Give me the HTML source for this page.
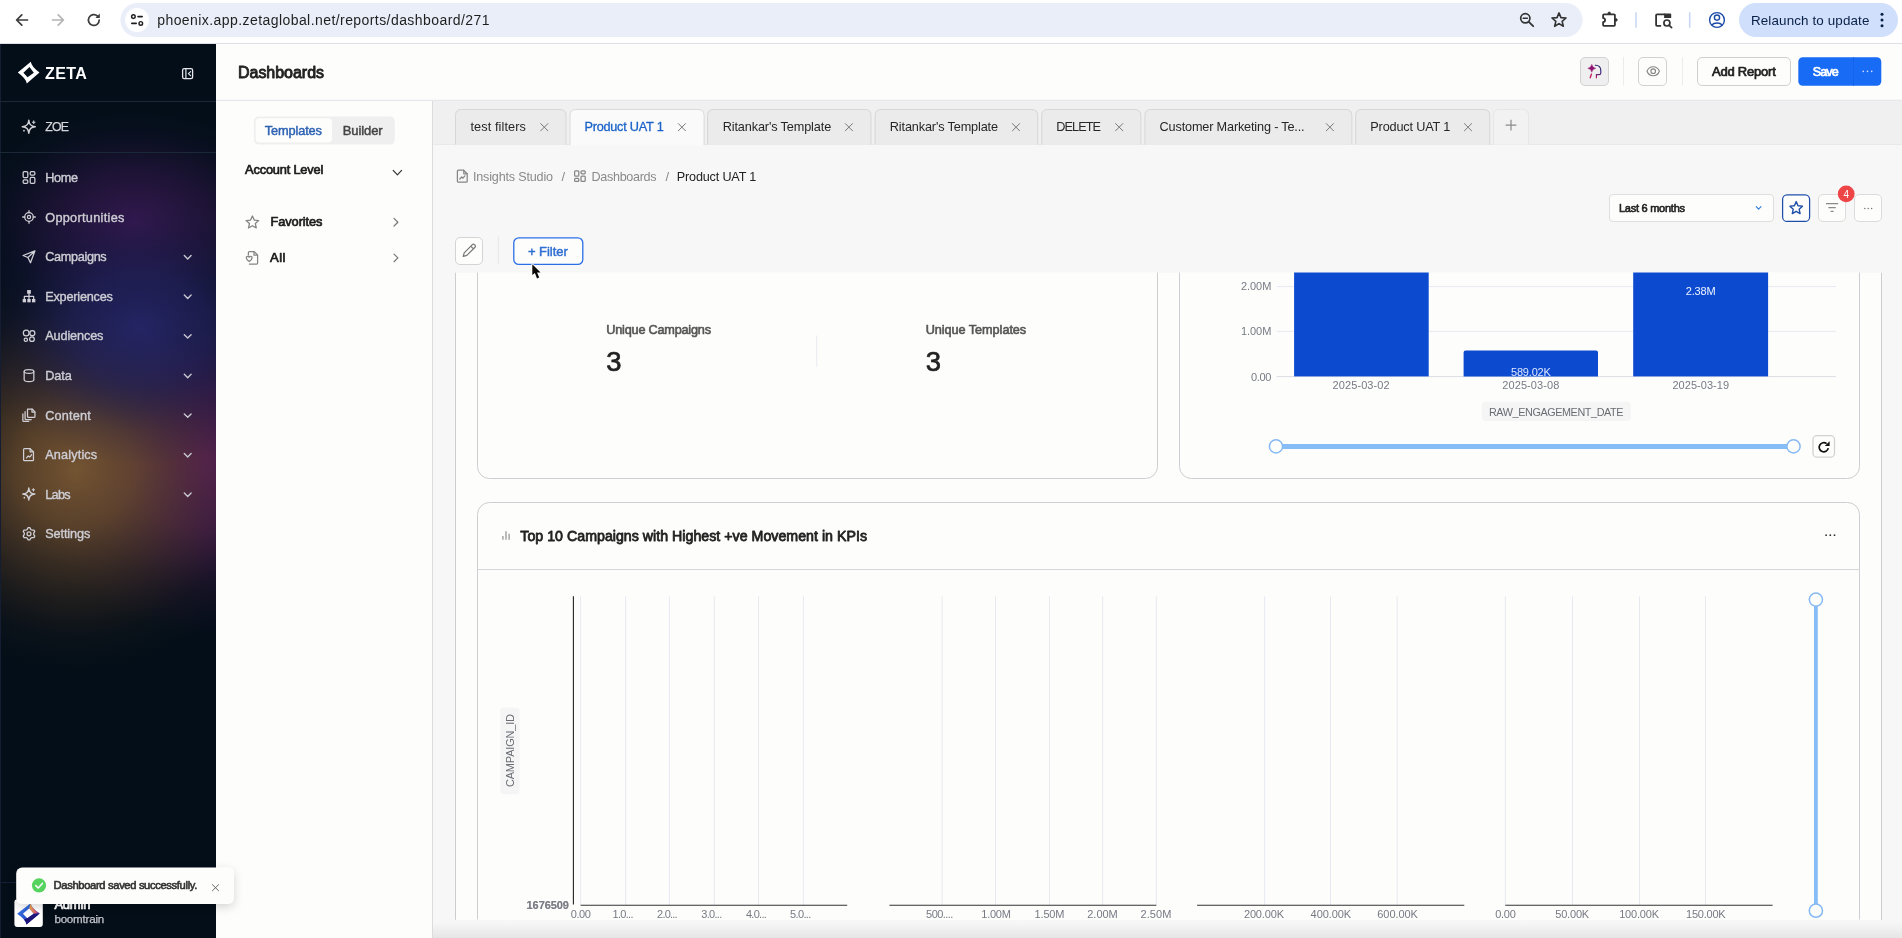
<!DOCTYPE html>
<html lang="en"><head><meta charset="utf-8"><title>Dashboards</title>
<style>
html,body{margin:0;padding:0;background:#f4f4f4;overflow:hidden}
svg{display:block;font-family:"Liberation Sans",sans-serif;will-change:transform;transform:translateZ(0)}
text{white-space:pre}
</style></head><body>
<svg width="1902" height="938" viewBox="0 0 1902 938">
<defs>

<radialGradient id="gPurple" gradientUnits="userSpaceOnUse" cx="135" cy="222" r="175" gradientTransform="translate(135 222) scale(1 0.66) translate(-135 -222)">
 <stop offset="0" stop-color="#3e1a58" stop-opacity="0.85"/><stop offset="0.45" stop-color="#34184e" stop-opacity="0.52"/><stop offset="0.8" stop-color="#2a1648" stop-opacity="0.12"/><stop offset="1" stop-color="#2a1648" stop-opacity="0"/></radialGradient>
<radialGradient id="gIndigo" gradientUnits="userSpaceOnUse" cx="140" cy="328" r="175" gradientTransform="translate(140 328) scale(1 0.78) translate(-140 -328)">
 <stop offset="0" stop-color="#252568" stop-opacity="0.95"/><stop offset="0.4" stop-color="#21215c" stop-opacity="0.7"/><stop offset="0.75" stop-color="#1a1a4c" stop-opacity="0.2"/><stop offset="1" stop-color="#1a1a4c" stop-opacity="0"/></radialGradient>
<radialGradient id="gOrange" gradientUnits="userSpaceOnUse" cx="76" cy="470" r="205">
 <stop offset="0" stop-color="#7a5832" stop-opacity="0.94"/><stop offset="0.28" stop-color="#6e4e2e" stop-opacity="0.78"/><stop offset="0.58" stop-color="#5a3e28" stop-opacity="0.4"/><stop offset="0.82" stop-color="#4a3222" stop-opacity="0.1"/><stop offset="1" stop-color="#4a3222" stop-opacity="0"/></radialGradient>
<radialGradient id="gMagenta" gradientUnits="userSpaceOnUse" cx="208" cy="462" r="175">
 <stop offset="0" stop-color="#55195e" stop-opacity="0.95"/><stop offset="0.4" stop-color="#4c1958" stop-opacity="0.7"/><stop offset="0.75" stop-color="#3c164c" stop-opacity="0.2"/><stop offset="1" stop-color="#3c164c" stop-opacity="0"/></radialGradient>
<clipPath id="sbClip"><rect x="0" y="44" width="216" height="894"/></clipPath>

<linearGradient id="aiG" gradientUnits="userSpaceOnUse" x1="1596" y1="65" x2="1596" y2="78"><stop offset="0" stop-color="#2a2a6a"/><stop offset="0.6" stop-color="#3a2a80"/><stop offset="1" stop-color="#c2185b"/></linearGradient>
<linearGradient id="botG" x1="0" y1="0" x2="0" y2="1"><stop offset="0" stop-color="#000" stop-opacity="0"/><stop offset="1" stop-color="#000" stop-opacity="0.07"/></linearGradient>
<clipPath id="contClip"><rect x="455" y="272.6" width="1427" height="646.8"/></clipPath>
<filter id="toastSh" x="-20%" y="-50%" width="140%" height="200%"><feDropShadow dx="0" dy="3" stdDeviation="5" flood-color="#000" flood-opacity="0.16"/></filter>
<linearGradient id="lgA" x1="0" y1="0" x2="1" y2="1"><stop offset="0" stop-color="#3a8af0"/><stop offset="0.6" stop-color="#2a4ac8"/><stop offset="1" stop-color="#2a1a8a"/></linearGradient>
<linearGradient id="lgB" x1="0" y1="0" x2="1" y2="0"><stop offset="0" stop-color="#f4b24a"/><stop offset="0.5" stop-color="#e06a6a"/><stop offset="1" stop-color="#7a2a9a"/></linearGradient>
<clipPath id="belowToast"><rect x="0" y="904" width="216" height="34"/></clipPath>
</defs>
<!-- browser chrome -->
<rect x="0" y="0" width="1902" height="44" fill="#ffffff" />
<line x1="0" y1="43.5" x2="1902" y2="43.5" stroke="#dcdfe4" stroke-width="1" />
<rect x="120.4" y="3" width="1462.2" height="34" fill="#e9eef8" rx="17" />
<circle cx="137" cy="20" r="12" fill="#ffffff" />
<g stroke="#1f1f1f" stroke-width="1.45" fill="none" stroke-linecap="round">
<circle cx="133.4" cy="16.6" r="1.8" fill="none" />
<line x1="138" y1="16.6" x2="142.2" y2="16.6" stroke="#1f1f1f" stroke-width="1.6" />
<circle cx="140.8" cy="23.4" r="1.8" fill="none" />
<line x1="131.8" y1="23.4" x2="136.2" y2="23.4" stroke="#1f1f1f" stroke-width="1.6" />
</g>
<text x="157.2" y="25" font-size="14" fill="#1f1f1f" textLength="332.3" lengthAdjust="spacing" >phoenix.app.zetaglobal.net/reports/dashboard/271</text>
<g stroke="#3c3c3c" stroke-width="1.7" fill="none" stroke-linecap="round" stroke-linejoin="round">
<path d="M27.5 20 H16.8 M21.8 14.8 L16.6 20 L21.8 25.2" fill="none" />
</g>
<g stroke="#b4b4b4" stroke-width="1.7" fill="none" stroke-linecap="round" stroke-linejoin="round">
<path d="M52.5 20 H63.2 M58.2 14.8 L63.4 20 L58.2 25.2" fill="none" />
</g>
<g stroke="#3c3c3c" stroke-width="1.7" fill="none" stroke-linecap="round" stroke-linejoin="round">
<path d="M99.2 20 A5.4 5.4 0 1 1 97.6 16.2" fill="none" />
</g>
<path d="M99.8 13.6 V18 H95.4 Z" fill="#3c3c3c" />
<g stroke="#333" stroke-width="1.7" fill="none" stroke-linecap="round">
<circle cx="1525.3" cy="18.3" r="4.6" fill="none" />
<line x1="1528.8" y1="21.8" x2="1533.2" y2="26.2" stroke="#333" stroke-width="1.8" />
<line x1="1523.2" y1="18.3" x2="1527.4" y2="18.3" stroke="#333" stroke-width="1.4" />
</g>
<path d="M1559.00 12.90 L1560.94 17.63 L1566.04 18.01 L1562.14 21.32 L1563.35 26.29 L1559.00 23.60 L1554.65 26.29 L1555.86 21.32 L1551.96 18.01 L1557.06 17.63 Z" fill="none" stroke="#333" stroke-width="1.6" stroke-linejoin="round"/>
<g stroke="#333" stroke-width="1.8" fill="none" stroke-linejoin="round">
<path d="M1604 14.3 h10 a0.9 0.9 0 0 1 0.9 0.9 v9.7 a0.9 0.9 0 0 1 -0.9 0.9 h-10 a0.9 0.9 0 0 1 -0.9 -0.9 v-2.8 a2 2 0 0 0 0 -4 v-2.9 a0.9 0.9 0 0 1 0.9 -0.9 z" fill="none" />
<circle cx="1609.2" cy="13.2" r="1.3" fill="#333" stroke="#333" stroke-width="0.6" />
<circle cx="1616" cy="19.9" r="1.3" fill="#333" stroke="#333" stroke-width="0.6" />
</g>
<line x1="1636" y1="12.2" x2="1636" y2="27.8" stroke="#c9d8f6" stroke-width="1.6" />
<g stroke="#333" stroke-width="1.8" fill="none" stroke-linejoin="round" stroke-linecap="round">
<path d="M1660.4 25.8 H1657 a0.9 0.9 0 0 1 -0.9 -0.9 V15.3 a0.9 0.9 0 0 1 0.9 -0.9 H1664.4" fill="none" />
</g>
<path d="M1664.1 13.5 H1670.2 a1 1 0 0 1 1 1 V17.9 H1664.1 Z" fill="#333" />
<g stroke="#333" stroke-width="1.7" fill="none" stroke-linecap="round">
<circle cx="1666.9" cy="23" r="3" fill="none" />
<line x1="1669.2" y1="25.3" x2="1671.6" y2="27.6" stroke="#333" stroke-width="1.7" />
</g>
<line x1="1689.7" y1="12.2" x2="1689.7" y2="27.8" stroke="#c9d8f6" stroke-width="1.6" />
<g stroke="#1a4aa8" stroke-width="1.4" fill="none">
<circle cx="1717" cy="20" r="7.4" fill="none" />
<circle cx="1717" cy="17.6" r="2.6" fill="none" />
<path d="M1711.6 24.9 a7 5.4 0 0 1 10.8 0" fill="none" />
</g>
<rect x="1739" y="3" width="159" height="34" fill="#d0dffb" rx="17" />
<text x="1751" y="24.7" font-size="13.4" fill="#081f47" textLength="118.4" lengthAdjust="spacing" >Relaunch to update</text>
<circle cx="1882" cy="14.3" r="1.5" fill="#081f47" />
<circle cx="1882" cy="20" r="1.5" fill="#081f47" />
<circle cx="1882" cy="25.7" r="1.5" fill="#081f47" />
<!-- sidebar -->
<g clip-path="url(#sbClip)">
<rect x="0" y="44" width="216" height="894" fill="#030e18" />
<rect x="0" y="44" width="216" height="894" fill="url(#gMagenta)" />
<rect x="0" y="44" width="216" height="894" fill="url(#gOrange)" />
<rect x="0" y="44" width="216" height="894" fill="url(#gPurple)" />
<rect x="0" y="44" width="216" height="894" fill="url(#gIndigo)" />
</g>
<rect x="0" y="44" width="1" height="894" fill="#151d33" />
<line x1="0" y1="101.5" x2="216" y2="101.5" stroke="#1a2838" stroke-width="1" />
<line x1="0" y1="152.5" x2="216" y2="152.5" stroke="#1a2838" stroke-width="1" />
<line x1="0" y1="882.5" x2="216" y2="882.5" stroke="#141f36" stroke-width="1" />
<path d="M30.8 61.8 Q31.6 67 39.5 72.4 L26.8 83.5 Q26 78.4 17.8 72.5 Z M29.5 67 L33.8 72.7 L27.6 77.2 L23.4 72.7 Z" fill="#ffffff" fill-rule="evenodd"/>
<text x="45" y="79" font-size="16" fill="#ffffff" font-weight="bold" textLength="41.8" lengthAdjust="spacing" >ZETA</text>
<rect x="182.6" y="68.6" width="10" height="10" fill="none" rx="1.6" stroke="#e8e8ee" stroke-width="1.3" />
<line x1="185.9" y1="68.6" x2="185.9" y2="78.6" stroke="#e8e8ee" stroke-width="1.2" />
<path d="M190.6 71.6 L188.4 73.6 L190.6 75.6" fill="none" stroke="#e8e8ee" stroke-width="1.2" stroke-linecap="round" stroke-linejoin="round"/>
<path d="M28.8 120.3 Q29.150000000000002 126.45 35.3 126.8 Q29.150000000000002 127.14999999999999 28.8 133.3 Q28.45 127.14999999999999 22.3 126.8 Q28.45 126.45 28.8 120.3 Z" fill="none" stroke="#d0d0d6" stroke-width="1.5" stroke-linejoin="round"/>
<path d="M33.7 120.6 v3.4 M32 122.3 h3.4" fill="none" stroke="#d0d0d6" stroke-width="1.1" />
<circle cx="24" cy="130.7" r="0.9" fill="#d0d0d6" />
<text x="45.2" y="130.9" font-size="12.3" fill="#d6d6dc" textLength="23.8" lengthAdjust="spacing" stroke="#d6d6dc" stroke-width="0.25" stroke-linejoin="round" >ZOE</text>
<text x="45.2" y="182.0" font-size="12.7" fill="#cdcdd4" textLength="32.8" lengthAdjust="spacing" stroke="#cdcdd4" stroke-width="0.38" stroke-linejoin="round" >Home</text>
<g transform="translate(29 177.4) scale(0.93) translate(-29 -177.4)">
<g fill="none" stroke="#d0d0d6" stroke-width="1.35" stroke-linejoin="round" stroke-linecap="round">
<rect x="22.7" y="171.1" width="5" height="6.6" fill="none" rx="1.2" />
<rect x="30.3" y="171.1" width="5" height="3.8" fill="none" rx="1.2" />
<rect x="22.7" y="180.1" width="5" height="3.8" fill="none" rx="1.2" />
<rect x="30.3" y="177.3" width="5" height="6.6" fill="none" rx="1.2" />
</g>
</g>
<text x="45.2" y="221.6" font-size="12.7" fill="#cdcdd4" textLength="79.2" lengthAdjust="spacing" stroke="#cdcdd4" stroke-width="0.38" stroke-linejoin="round" >Opportunities</text>
<g transform="translate(29 217.0) scale(0.93) translate(-29 -217.0)">
<g fill="none" stroke="#d0d0d6" stroke-width="1.35" stroke-linejoin="round" stroke-linecap="round">
<circle cx="29" cy="217.0" r="4.6" fill="none" />
<circle cx="29" cy="217.0" r="1.7" fill="none" />
<path d="M29 210.2 v2.2 M29 221.6 v2.2 M22.2 217.0 h2.2 M33.6 217.0 h2.2" fill="none" />
</g>
</g>
<text x="45.2" y="261.2" font-size="12.7" fill="#cdcdd4" textLength="61.5" lengthAdjust="spacing" stroke="#cdcdd4" stroke-width="0.38" stroke-linejoin="round" >Campaigns</text>
<path d="M184.29999999999998 255.5 L187.7 258.9 L191.1 255.5" fill="none" stroke="#c8c8d0" stroke-width="1.4" stroke-linecap="round" stroke-linejoin="round"/>
<g transform="translate(29 256.6) scale(0.93) translate(-29 -256.6)">
<g fill="none" stroke="#d0d0d6" stroke-width="1.35" stroke-linejoin="round" stroke-linecap="round">
<path d="M35.4 250.40000000000003 L22.6 255.40000000000003 L27.8 257.6 L30.6 263.20000000000005 Z M27.8 257.6 L35.4 250.40000000000003" fill="none" />
</g>
</g>
<text x="45.2" y="300.8" font-size="12.7" fill="#cdcdd4" textLength="67.7" lengthAdjust="spacing" stroke="#cdcdd4" stroke-width="0.38" stroke-linejoin="round" >Experiences</text>
<path d="M184.29999999999998 295.1 L187.7 298.5 L191.1 295.1" fill="none" stroke="#c8c8d0" stroke-width="1.4" stroke-linecap="round" stroke-linejoin="round"/>
<g transform="translate(29 296.2) scale(0.93) translate(-29 -296.2)">
<g fill="none" stroke="#d0d0d6" stroke-width="1.35" stroke-linejoin="round" stroke-linecap="round">
<rect x="27" y="289.59999999999997" width="4" height="4" fill="#d0d0d6" stroke="none" stroke-width="1" />
<rect x="22.2" y="299.2" width="3.6" height="3.6" fill="#d0d0d6" stroke="none" stroke-width="1" />
<rect x="27.2" y="299.2" width="3.6" height="3.6" fill="#d0d0d6" stroke="none" stroke-width="1" />
<rect x="32.2" y="299.2" width="3.6" height="3.6" fill="#d0d0d6" stroke="none" stroke-width="1" />
<path d="M29 293.59999999999997 V299.2 M24 299.2 V296.4 H34 V299.2" fill="none" />
</g>
</g>
<text x="45.2" y="340.4" font-size="12.7" fill="#cdcdd4" textLength="58.2" lengthAdjust="spacing" stroke="#cdcdd4" stroke-width="0.38" stroke-linejoin="round" >Audiences</text>
<path d="M184.29999999999998 334.7 L187.7 338.09999999999997 L191.1 334.7" fill="none" stroke="#c8c8d0" stroke-width="1.4" stroke-linecap="round" stroke-linejoin="round"/>
<g transform="translate(29 335.8) scale(0.93) translate(-29 -335.8)">
<g fill="none" stroke="#d0d0d6" stroke-width="1.35" stroke-linejoin="round" stroke-linecap="round">
<circle cx="26" cy="332.8" r="3.1" fill="none" />
<circle cx="32.6" cy="333.0" r="2.7" fill="none" />
<circle cx="32.2" cy="339.40000000000003" r="2.5" fill="none" />
<circle cx="25.6" cy="340.0" r="1.8" fill="none" />
</g>
</g>
<text x="45.2" y="380.0" font-size="12.7" fill="#cdcdd4" textLength="26.6" lengthAdjust="spacing" stroke="#cdcdd4" stroke-width="0.38" stroke-linejoin="round" >Data</text>
<path d="M184.29999999999998 374.3 L187.7 377.7 L191.1 374.3" fill="none" stroke="#c8c8d0" stroke-width="1.4" stroke-linecap="round" stroke-linejoin="round"/>
<g transform="translate(29 375.4) scale(0.93) translate(-29 -375.4)">
<g fill="none" stroke="#d0d0d6" stroke-width="1.35" stroke-linejoin="round" stroke-linecap="round">
<path d="M23.8 371.2 V380.0 A5.2 2 0 0 0 34.2 380.0 V371.2" fill="none" />
<ellipse cx="29" cy="371.2" rx="5.2" ry="2"/>
</g>
</g>
<text x="45.2" y="419.6" font-size="12.7" fill="#cdcdd4" textLength="45.7" lengthAdjust="spacing" stroke="#cdcdd4" stroke-width="0.38" stroke-linejoin="round" >Content</text>
<path d="M184.29999999999998 413.90000000000003 L187.7 417.3 L191.1 413.90000000000003" fill="none" stroke="#c8c8d0" stroke-width="1.4" stroke-linecap="round" stroke-linejoin="round"/>
<g transform="translate(29 415.0) scale(0.93) translate(-29 -415.0)">
<g fill="none" stroke="#d0d0d6" stroke-width="1.35" stroke-linejoin="round" stroke-linecap="round">
<path d="M27.4 408.6 h5 l3 3 v5 a1 1 0 0 1 -1 1 h-6 a1 1 0 0 1 -1 -1 z" fill="none" />
<path d="M32.2 408.8 v3 h3" fill="none" />
<path d="M24.8 411.4 v7.6 a1 1 0 0 0 1 1 h5.6" fill="none" />
<path d="M22.4 413.8 v7 a1 1 0 0 0 1 1 h5.4" fill="none" />
</g>
</g>
<text x="45.2" y="459.2" font-size="12.7" fill="#cdcdd4" textLength="52" lengthAdjust="spacing" stroke="#cdcdd4" stroke-width="0.38" stroke-linejoin="round" >Analytics</text>
<path d="M184.29999999999998 453.5 L187.7 456.9 L191.1 453.5" fill="none" stroke="#c8c8d0" stroke-width="1.4" stroke-linecap="round" stroke-linejoin="round"/>
<g transform="translate(29 454.6) scale(0.93) translate(-29 -454.6)">
<g fill="none" stroke="#d0d0d6" stroke-width="1.35" stroke-linejoin="round" stroke-linecap="round">
<path d="M24.2 448.20000000000005 h6 l3.6 3.6 v8.4 a1 1 0 0 1 -1 1 h-8.6 a1 1 0 0 1 -1 -1 v-11 a1 1 0 0 1 1 -1 z" fill="none" />
<path d="M30.2 448.40000000000003 v3.4 h3.4" fill="none" />
<path d="M26.4 458.20000000000005 l1.8 -2.2 l1.6 1.2 l2 -2.6" fill="none" />
</g>
</g>
<text x="45.2" y="498.8" font-size="12.7" fill="#cdcdd4" textLength="25.5" lengthAdjust="spacing" stroke="#cdcdd4" stroke-width="0.38" stroke-linejoin="round" >Labs</text>
<path d="M184.29999999999998 493.1 L187.7 496.5 L191.1 493.1" fill="none" stroke="#c8c8d0" stroke-width="1.4" stroke-linecap="round" stroke-linejoin="round"/>
<g transform="translate(29 494.2) scale(0.93) translate(-29 -494.2)">
<g fill="none" stroke="#d0d0d6" stroke-width="1.35" stroke-linejoin="round" stroke-linecap="round">
</g>
<path d="M28.8 487.5 Q29.150000000000002 493.65 35.3 494.0 Q29.150000000000002 494.35 28.8 500.5 Q28.45 494.35 22.3 494.0 Q28.45 493.65 28.8 487.5 Z" fill="none" stroke="#d0d0d6" stroke-width="1.5" stroke-linejoin="round"/>
<path d="M33.7 487.8 v3.4 M32 489.5 h3.4" fill="none" stroke="#d0d0d6" stroke-width="1.1" />
<circle cx="24" cy="497.9" r="0.9" fill="#d0d0d6" />
<g >
</g>
</g>
<text x="45.2" y="538.4" font-size="12.7" fill="#cdcdd4" textLength="45.1" lengthAdjust="spacing" stroke="#cdcdd4" stroke-width="0.38" stroke-linejoin="round" >Settings</text>
<g transform="translate(29 533.8) scale(0.93) translate(-29 -533.8)">
<g fill="none" stroke="#d0d0d6" stroke-width="1.35" stroke-linejoin="round" stroke-linecap="round">
<path d="M28.13 527.16 L29.87 527.16 L30.95 529.09 L32.10 529.75 L34.32 529.72 L35.19 531.24 L34.06 533.13 L34.06 534.47 L35.19 536.36 L34.32 537.88 L32.10 537.85 L30.95 538.51 L29.87 540.44 L28.13 540.44 L27.05 538.51 L25.90 537.85 L23.68 537.88 L22.81 536.36 L23.94 534.47 L23.94 533.13 L22.81 531.24 L23.68 529.72 L25.90 529.75 L27.05 529.09 Z" fill="none" />
<circle cx="29" cy="533.8" r="2.1" fill="none" />
</g>
</g>
<!-- header -->
<rect x="216" y="44" width="1686" height="56.5" fill="#fdfdfc" />
<line x1="216" y1="100.5" x2="1902" y2="100.5" stroke="#e6e8ea" stroke-width="1.4" />
<text x="238" y="77.8" font-size="16" fill="#222222" textLength="86" lengthAdjust="spacing" stroke="#222222" stroke-width="0.88" stroke-linejoin="round" >Dashboards</text>
<rect x="1580.5" y="57.5" width="28" height="28" fill="#efefef" rx="4.5" stroke="#d2d2d2" stroke-width="1" />
<path d="M1591.8 64.3 Q1592.5 67.6 1595.8 68.3 Q1592.5 69.0 1591.8 72.3 Q1591.1 69.0 1587.8 68.3 Q1591.1 67.6 1591.8 64.3 Z" fill="#8e1070" stroke="#8e1070" stroke-width="0.4" stroke-linejoin="round"/>
<path d="M1595.4 65.2 Q1600.8 65.4 1600.8 70.6 V73 Q1600.8 74.6 1599.2 74.6 H1596.4 V77.8" fill="none" stroke="url(#aiG)" stroke-width="1.15" stroke-linecap="round" stroke-linejoin="round"/>
<path d="M1591.4 74.2 L1590.2 77.8" fill="none" stroke="#c2185b" stroke-width="1.3" stroke-linecap="round"/>
<line x1="1623.5" y1="57" x2="1623.5" y2="85" stroke="#ececec" stroke-width="1" />
<rect x="1638.5" y="57.5" width="28" height="28" fill="#fdfdfc" rx="4.5" stroke="#d2d2d2" stroke-width="1" />
<g fill="none" stroke="#858585" stroke-width="1.1">
<path d="M1647 71.2 C1649.4 65.2 1657 65.2 1659.4 71.2 C1657 77.2 1649.4 77.2 1647 71.2 Z" fill="none" />
<circle cx="1653.2" cy="71.2" r="2.3" fill="none" />
</g>
<line x1="1682.5" y1="57" x2="1682.5" y2="85" stroke="#ececec" stroke-width="1" />
<rect x="1697.5" y="57.5" width="93" height="28" fill="#fdfdfc" rx="4.5" stroke="#cfcfcf" stroke-width="1" />
<text x="1712" y="76.4" font-size="13" fill="#222222" textLength="63.8" lengthAdjust="spacing" stroke="#222222" stroke-width="0.71" stroke-linejoin="round" >Add Report</text>
<rect x="1798.3" y="57.2" width="83" height="28.6" fill="#176bf4" rx="4.5" />
<line x1="1853.5" y1="57.2" x2="1853.5" y2="85.8" stroke="#1463ea" stroke-width="1" />
<text x="1812.7" y="76.4" font-size="12.6" fill="#ffffff" textLength="26" lengthAdjust="spacing" stroke="#ffffff" stroke-width="0.69" stroke-linejoin="round" >Save</text>
<circle cx="1863.3" cy="71.4" r="0.8" fill="#cfe0ff" />
<circle cx="1867.5" cy="71.4" r="0.8" fill="#cfe0ff" />
<circle cx="1871.7" cy="71.4" r="0.8" fill="#cfe0ff" />
<!-- left panel -->
<rect x="216" y="101.2" width="216" height="837" fill="#fdfdfc" />
<line x1="432.5" y1="101" x2="432.5" y2="938" stroke="#dcdcdc" stroke-width="1" />
<rect x="254" y="116.4" width="140.8" height="28.2" fill="#efefef" rx="5" />
<rect x="255.6" y="118.2" width="76.4" height="24.4" fill="#fdfdfc" rx="4" />
<text x="264.7" y="135.1" font-size="12.8" fill="#2d62b3" textLength="57.3" lengthAdjust="spacing" stroke="#2d62b3" stroke-width="0.45" stroke-linejoin="round" >Templates</text>
<text x="342.7" y="135.1" font-size="13" fill="#444444" textLength="40" lengthAdjust="spacing" stroke="#444444" stroke-width="0.45" stroke-linejoin="round" >Builder</text>
<text x="245.1" y="173.7" font-size="12.8" fill="#1c1c1c" textLength="78.2" lengthAdjust="spacing" stroke="#1c1c1c" stroke-width="0.7" stroke-linejoin="round" >Account Level</text>
<path d="M393.2 170.4 L397.4 174.8 L401.6 170.4" fill="none" stroke="#333" stroke-width="1.2" stroke-linecap="round" stroke-linejoin="round"/>
<path d="M252.40 216.00 L254.22 220.09 L258.68 220.56 L255.35 223.56 L256.28 227.94 L252.40 225.70 L248.52 227.94 L249.45 223.56 L246.12 220.56 L250.58 220.09 Z" fill="none" stroke="#858585" stroke-width="1.3" stroke-linejoin="round"/>
<text x="270.5" y="225.8" font-size="12.8" fill="#1c1c1c" textLength="52" lengthAdjust="spacing" stroke="#1c1c1c" stroke-width="0.7" stroke-linejoin="round" >Favorites</text>
<path d="M394 218.4 L397.9 222.2 L394 226" fill="none" stroke="#777" stroke-width="1.2" stroke-linecap="round" stroke-linejoin="round"/>
<g fill="none" stroke="#858585" stroke-width="1.25" stroke-linejoin="round" stroke-linecap="round">
<path d="M248.4 255 v-2.4 a1 1 0 0 1 1 -1 h4.8 l3.4 3.4 v8 a1 1 0 0 1 -1 1 h-7.2" fill="none" />
<path d="M254 251.8 v3.4 h3.4" fill="none" />
<path d="M246.2 257.6 a1.6 1.6 0 0 1 3 -0.4 a1.6 1.6 0 0 1 3 0.4 q0 2 -3 4 q-3 -2 -3 -4 z" fill="none" />
</g>
<text x="270" y="261.8" font-size="13" fill="#1c1c1c" textLength="15.4" lengthAdjust="spacing" stroke="#1c1c1c" stroke-width="0.71" stroke-linejoin="round" >All</text>
<path d="M394 254.1 L397.9 257.9 L394 261.7" fill="none" stroke="#777" stroke-width="1.2" stroke-linecap="round" stroke-linejoin="round"/>
<!-- main area -->
<rect x="433" y="101.2" width="1469" height="43.3" fill="#f0f0f0" />
<rect x="433" y="144.5" width="1469" height="794" fill="#f7f7f7" />
<line x1="433" y1="144.5" x2="1902" y2="144.5" stroke="#e9e9e9" stroke-width="1" />
<rect x="433" y="922" width="1469" height="16" fill="url(#botG)" />
<path d="M455.5 144.5 V115.5 Q455.5 109.5 461.5 109.5 H560.0 Q566.0 109.5 566.0 115.5 V144.5" fill="#ebebeb" stroke="#d6d6d6" stroke-width="1" />
<text x="470.4" y="130.8" font-size="12.7" fill="#262626" textLength="55.5" lengthAdjust="spacing" >test filters</text>
<path d="M540.6999999999999 123.60000000000001 L547.9 130.8 M547.9 123.60000000000001 L540.6999999999999 130.8" fill="none" stroke="#787878" stroke-width="1.0" stroke-linecap="round"/>
<path d="M570.0 145.2 V115.5 Q570.0 109.5 576.0 109.5 H698.1 Q704.1 109.5 704.1 115.5 V145.2" fill="#fafafa" stroke="#dadada" stroke-width="1" />
<text x="584.4" y="130.8" font-size="12.7" fill="#1a62c8" textLength="79.3" lengthAdjust="spacing" stroke="#1a62c8" stroke-width="0.3" stroke-linejoin="round" >Product UAT 1</text>
<path d="M678.3 123.60000000000001 L685.5 130.8 M685.5 123.60000000000001 L678.3 130.8" fill="none" stroke="#787878" stroke-width="1.0" stroke-linecap="round"/>
<path d="M707.6 144.5 V115.5 Q707.6 109.5 713.6 109.5 H865.0 Q871.0 109.5 871.0 115.5 V144.5" fill="#ebebeb" stroke="#d6d6d6" stroke-width="1" />
<text x="722.7" y="130.8" font-size="12.7" fill="#262626" textLength="108.5" lengthAdjust="spacing" >Ritankar's Template</text>
<path d="M845.3 123.60000000000001 L852.5 130.8 M852.5 123.60000000000001 L845.3 130.8" fill="none" stroke="#787878" stroke-width="1.0" stroke-linecap="round"/>
<path d="M875.1 144.5 V115.5 Q875.1 109.5 881.1 109.5 H1031.7 Q1037.7 109.5 1037.7 115.5 V144.5" fill="#ebebeb" stroke="#d6d6d6" stroke-width="1" />
<text x="889.8" y="130.8" font-size="12.7" fill="#262626" textLength="108.2" lengthAdjust="spacing" >Ritankar's Template</text>
<path d="M1012.4 123.60000000000001 L1019.6 130.8 M1019.6 123.60000000000001 L1012.4 130.8" fill="none" stroke="#787878" stroke-width="1.0" stroke-linecap="round"/>
<path d="M1041.7 144.5 V115.5 Q1041.7 109.5 1047.7 109.5 H1134.9 Q1140.9 109.5 1140.9 115.5 V144.5" fill="#ebebeb" stroke="#d6d6d6" stroke-width="1" />
<text x="1056.3" y="130.8" font-size="12.7" fill="#262626" textLength="44.7" lengthAdjust="spacing" >DELETE</text>
<path d="M1115.6000000000001 123.60000000000001 L1122.8 130.8 M1122.8 123.60000000000001 L1115.6000000000001 130.8" fill="none" stroke="#787878" stroke-width="1.0" stroke-linecap="round"/>
<path d="M1144.9 144.5 V115.5 Q1144.9 109.5 1150.9 109.5 H1345.9 Q1351.9 109.5 1351.9 115.5 V144.5" fill="#ebebeb" stroke="#d6d6d6" stroke-width="1" />
<text x="1159.6" y="130.8" font-size="12.7" fill="#262626" textLength="145" lengthAdjust="spacing" >Customer Marketing - Te...</text>
<path d="M1326.3000000000002 123.60000000000001 L1333.5 130.8 M1333.5 123.60000000000001 L1326.3000000000002 130.8" fill="none" stroke="#787878" stroke-width="1.0" stroke-linecap="round"/>
<path d="M1355.7 144.5 V115.5 Q1355.7 109.5 1361.7 109.5 H1483.7 Q1489.7 109.5 1489.7 115.5 V144.5" fill="#ebebeb" stroke="#d6d6d6" stroke-width="1" />
<text x="1370.3" y="130.8" font-size="12.7" fill="#262626" textLength="80" lengthAdjust="spacing" >Product UAT 1</text>
<path d="M1464.4 123.60000000000001 L1471.6 130.8 M1471.6 123.60000000000001 L1464.4 130.8" fill="none" stroke="#787878" stroke-width="1.0" stroke-linecap="round"/>
<path d="M1493.5 144.5 V115.5 Q1493.5 109.5 1499.5 109.5 H1522.5 Q1528.5 109.5 1528.5 115.5 V144.5" fill="#f2f2f2" stroke="#e6e6e6" stroke-width="1" />
<path d="M1505.6 125.2 H1516.4 M1511 119.8 V130.6" fill="none" stroke="#8a8a8a" stroke-width="1.2" />
<g fill="none" stroke="#858585" stroke-width="1.25" stroke-linejoin="round" stroke-linecap="round" transform="translate(0.4 -0.6)">
<path d="M458 170.8 h5.2 l3.6 3.6 v7.4 a1 1 0 0 1 -1 1 h-7.8 a1 1 0 0 1 -1 -1 v-10 a1 1 0 0 1 1 -1 z" fill="none" />
<path d="M463.4 171 v3.4 h3.4" fill="none" />
<path d="M459.4 179.8 l1.8 -2.2 l1.4 1.2 l1.8 -2.4" fill="none" />
</g>
<text x="472.9" y="181.3" font-size="12.6" fill="#8a8a8a" textLength="80.2" lengthAdjust="spacing" >Insights Studio</text>
<text x="561.5" y="181.3" font-size="13" fill="#8a8a8a" >/</text>
<g fill="none" stroke="#858585" stroke-width="1.25">
<rect x="574.6" y="170.8" width="4.2" height="5.4" fill="none" rx="1" />
<rect x="581" y="170.8" width="4.2" height="3" fill="none" rx="1" />
<rect x="574.6" y="178.4" width="4.2" height="3" fill="none" rx="1" />
<rect x="581" y="176" width="4.2" height="5.4" fill="none" rx="1" />
</g>
<text x="591.5" y="181.3" font-size="12.6" fill="#8a8a8a" textLength="65.1" lengthAdjust="spacing" >Dashboards</text>
<text x="665.4" y="181.3" font-size="13" fill="#8a8a8a" >/</text>
<text x="676.8" y="181.3" font-size="12.6" fill="#222222" textLength="79.5" lengthAdjust="spacing" >Product UAT 1</text>
<rect x="1609.5" y="194.5" width="164" height="27" fill="#fdfdfc" rx="3.5" stroke="#dedede" stroke-width="1" />
<text x="1619" y="212" font-size="11" fill="#222222" textLength="66" lengthAdjust="spacing" stroke="#222222" stroke-width="0.6" stroke-linejoin="round" >Last 6 months</text>
<path d="M1756.2 206.6 L1758.6 209.2 L1761 206.6" fill="none" stroke="#2b7de0" stroke-width="1.1" stroke-linecap="round" stroke-linejoin="round"/>
<rect x="1782.6" y="194.8" width="27" height="26.6" fill="#fdfdfc" rx="4.5" stroke="#1e4fa8" stroke-width="1.25" />
<path d="M1796.20 201.60 L1798.02 205.69 L1802.48 206.16 L1799.15 209.16 L1800.08 213.54 L1796.20 211.30 L1792.32 213.54 L1793.25 209.16 L1789.92 206.16 L1794.38 205.69 Z" fill="none" stroke="#1e4fa8" stroke-width="1.4" stroke-linejoin="round"/>
<rect x="1818.5" y="194.5" width="27" height="27" fill="#fdfdfc" rx="4.5" stroke="#dcdcdc" stroke-width="1" />
<path d="M1826 203.6 H1838.2 M1828.4 207.6 H1835.8 M1830.6 211.4 H1833.6" fill="none" stroke="#8a8a8a" stroke-width="1.1" />
<circle cx="1846.2" cy="193.9" r="8.4" fill="#ee4646" />
<text x="1846.2" y="197.6" font-size="10" fill="#ffffff" text-anchor="middle" >4</text>
<rect x="1854.5" y="194.5" width="27" height="27" fill="#fdfdfc" rx="4.5" stroke="#dcdcdc" stroke-width="1" />
<circle cx="1864.8" cy="208.4" r="0.75" fill="#777" />
<circle cx="1868.2" cy="208.4" r="0.75" fill="#777" />
<circle cx="1871.6000000000001" cy="208.4" r="0.75" fill="#777" />
<rect x="455.5" y="237.5" width="27" height="27" fill="#fdfdfc" rx="4.5" stroke="#d4d4d4" stroke-width="1" />
<g fill="none" stroke="#777" stroke-width="1.2" stroke-linejoin="round" stroke-linecap="round">
<path d="M463.2 256.4 l1 -3.6 l8.2 -8.2 a1.4 1.4 0 0 1 2 0 l0.6 0.6 a1.4 1.4 0 0 1 0 2 l-8.2 8.2 z M470.8 246.2 l2.6 2.6" fill="none" />
</g>
<line x1="498.4" y1="236.5" x2="498.4" y2="264.5" stroke="#e6e6e6" stroke-width="1" />
<rect x="513.8" y="237.8" width="69" height="26.6" fill="#fdfdfc" rx="5" stroke="#2a6fe8" stroke-width="1.3" />
<text x="528" y="255.7" font-size="13" fill="#2f6fd2" textLength="39.8" lengthAdjust="spacing" stroke="#2f6fd2" stroke-width="0.45" stroke-linejoin="round" >+ Filter</text>
<!-- dashboard container -->
<rect x="455.5" y="272.8" width="1426" height="647" fill="#fdfdfc" />
<line x1="455.5" y1="272.8" x2="455.5" y2="919.8" stroke="#cdcdcd" stroke-width="1" />
<line x1="1881.5" y1="272.8" x2="1881.5" y2="919.8" stroke="#cdcdcd" stroke-width="1" />
<g clip-path="url(#contClip)">
<rect x="477.5" y="240" width="680" height="238.5" fill="#fdfdfc" rx="12" stroke="#cdced1" stroke-width="1" />
<text x="606.3" y="334.1" font-size="12.7" fill="#555555" textLength="104.7" lengthAdjust="spacing" stroke="#555555" stroke-width="0.6" stroke-linejoin="round" >Unique Campaigns</text>
<text x="606.3" y="370.8" font-size="27.4" fill="#222222" stroke="#222222" stroke-width="0.7" stroke-linejoin="round" >3</text>
<line x1="816.7" y1="335.5" x2="816.7" y2="366.7" stroke="#e9ebf2" stroke-width="1" />
<text x="925.7" y="334.1" font-size="12.7" fill="#555555" textLength="100.5" lengthAdjust="spacing" stroke="#555555" stroke-width="0.6" stroke-linejoin="round" >Unique Templates</text>
<text x="925.8" y="370.8" font-size="27.4" fill="#222222" stroke="#222222" stroke-width="0.7" stroke-linejoin="round" >3</text>
<rect x="1179.5" y="240" width="680" height="238.5" fill="#fdfdfc" rx="12" stroke="#cdced1" stroke-width="1" />
<line x1="1276.7" y1="286.6" x2="1835.8" y2="286.6" stroke="#e7e9f1" stroke-width="1" />
<line x1="1276.7" y1="331.4" x2="1835.8" y2="331.4" stroke="#e7e9f1" stroke-width="1" />
<line x1="1276.7" y1="376.6" x2="1835.8" y2="376.6" stroke="#dcdde3" stroke-width="1" />
<text x="1271.3" y="290.1" font-size="11" fill="#777a83" textLength="30.3" lengthAdjust="spacing" text-anchor="end" >2.00M</text>
<text x="1271.3" y="334.9" font-size="11" fill="#777a83" textLength="30.3" lengthAdjust="spacing" text-anchor="end" >1.00M</text>
<text x="1271.3" y="380.8" font-size="11" fill="#777a83" textLength="20.4" lengthAdjust="spacing" text-anchor="end" >0.00</text>
<rect x="1294.1" y="272" width="134.6" height="104.4" fill="#0c4ad0" />
<path d="M1463.6 376.4 V352.6 Q1463.6 350.6 1465.6 350.6 H1596 Q1598 350.6 1598 352.6 V376.4 Z" fill="#0c4ad0" />
<rect x="1633.2" y="272" width="134.9" height="104.4" fill="#0c4ad0" />
<text x="1511" y="376.2" font-size="11" fill="#dfe8ff" textLength="39.9" lengthAdjust="spacing" >589.02K</text>
<text x="1685.7" y="295.1" font-size="11" fill="#eef3ff" textLength="30" lengthAdjust="spacing" >2.38M</text>
<text x="1332.5" y="389.4" font-size="11" fill="#777a83" textLength="57.2" lengthAdjust="spacing" >2025-03-02</text>
<text x="1502.3" y="389.4" font-size="11" fill="#777a83" textLength="57" lengthAdjust="spacing" >2025-03-08</text>
<text x="1672.4" y="389.4" font-size="11" fill="#777a83" textLength="56.7" lengthAdjust="spacing" >2025-03-19</text>
<rect x="1481.9" y="401.7" width="149" height="19.4" fill="#f5f5f6" rx="4" />
<text x="1488.9" y="416.1" font-size="10.8" fill="#6a6c74" textLength="134.6" lengthAdjust="spacing" >RAW_ENGAGEMENT_DATE</text>
<line x1="1276" y1="446.4" x2="1793" y2="446.4" stroke="#86bdf6" stroke-width="5" />
<circle cx="1276" cy="446.4" r="6.6" fill="#fdfdfc" stroke="#86b9f3" stroke-width="1.5" />
<circle cx="1793.5" cy="446.4" r="6.6" fill="#fdfdfc" stroke="#86b9f3" stroke-width="1.5" />
<rect x="1813" y="435.7" width="21.5" height="21.5" fill="#fdfdfc" rx="4" stroke="#d2d2d0" stroke-width="1.3" />
<path d="M1828.3 448.2 A4.6 4.6 0 1 1 1826.6 443.6" fill="none" stroke="#111" stroke-width="1.65" />
<path d="M1829.6 441.2 V446 H1824.8 Z" fill="#111" />
<rect x="477.5" y="502.5" width="1382" height="460" fill="#fdfdfc" rx="12" stroke="#cdced1" stroke-width="1" />
<line x1="478" y1="569.5" x2="1859.5" y2="569.5" stroke="#d6d7da" stroke-width="1" />
<path d="M502.9 536 V539.8 M506 531.2 V539.8 M509.1 533.8 V539.8" fill="none" stroke="#909090" stroke-width="1.2" />
<text x="520.3" y="540.9" font-size="14.2" fill="#222222" textLength="346.7" lengthAdjust="spacing" stroke="#222222" stroke-width="0.78" stroke-linejoin="round" >Top 10 Campaigns with Highest +ve Movement in KPIs</text>
<circle cx="1826.1" cy="535.2" r="0.9" fill="#333" />
<circle cx="1830.3" cy="535.2" r="0.9" fill="#333" />
<circle cx="1834.5" cy="535.2" r="0.9" fill="#333" />
<line x1="580.6" y1="596.5" x2="580.6" y2="905" stroke="#e7e9f1" stroke-width="1" />
<line x1="625.6" y1="596.5" x2="625.6" y2="905" stroke="#e7e9f1" stroke-width="1" />
<line x1="669.4" y1="596.5" x2="669.4" y2="905" stroke="#e7e9f1" stroke-width="1" />
<line x1="714.3" y1="596.5" x2="714.3" y2="905" stroke="#e7e9f1" stroke-width="1" />
<line x1="758.5" y1="596.5" x2="758.5" y2="905" stroke="#e7e9f1" stroke-width="1" />
<line x1="803.4" y1="596.5" x2="803.4" y2="905" stroke="#e7e9f1" stroke-width="1" />
<line x1="942.2" y1="596.5" x2="942.2" y2="905" stroke="#e7e9f1" stroke-width="1" />
<line x1="995.5" y1="596.5" x2="995.5" y2="905" stroke="#e7e9f1" stroke-width="1" />
<line x1="1049.5" y1="596.5" x2="1049.5" y2="905" stroke="#e7e9f1" stroke-width="1" />
<line x1="1102.7" y1="596.5" x2="1102.7" y2="905" stroke="#e7e9f1" stroke-width="1" />
<line x1="1156.3" y1="596.5" x2="1156.3" y2="905" stroke="#e7e9f1" stroke-width="1" />
<line x1="1264.6" y1="596.5" x2="1264.6" y2="905" stroke="#e7e9f1" stroke-width="1" />
<line x1="1330.5" y1="596.5" x2="1330.5" y2="905" stroke="#e7e9f1" stroke-width="1" />
<line x1="1397.2" y1="596.5" x2="1397.2" y2="905" stroke="#e7e9f1" stroke-width="1" />
<line x1="1505.3" y1="596.5" x2="1505.3" y2="905" stroke="#e7e9f1" stroke-width="1" />
<line x1="1572.4" y1="596.5" x2="1572.4" y2="905" stroke="#e7e9f1" stroke-width="1" />
<line x1="1639.5" y1="596.5" x2="1639.5" y2="905" stroke="#e7e9f1" stroke-width="1" />
<line x1="1705.5" y1="596.5" x2="1705.5" y2="905" stroke="#e7e9f1" stroke-width="1" />
<line x1="573.4" y1="596.3" x2="573.4" y2="904.4" stroke="#222" stroke-width="1.1" />
<line x1="580.6" y1="905.3" x2="847.2" y2="905.3" stroke="#333" stroke-width="1.1" />
<line x1="889.4" y1="905.3" x2="1156.3" y2="905.3" stroke="#333" stroke-width="1.1" />
<line x1="1197.1" y1="905.3" x2="1464.3" y2="905.3" stroke="#333" stroke-width="1.1" />
<line x1="1505.3" y1="905.3" x2="1772.6" y2="905.3" stroke="#333" stroke-width="1.1" />
<text x="570.8" y="918" font-size="11" fill="#777a83" textLength="20.1" lengthAdjust="spacing" >0.00</text>
<text x="612.6" y="918" font-size="11" fill="#777a83" textLength="20.9" lengthAdjust="spacing" >1.0...</text>
<text x="657.1" y="918" font-size="11" fill="#777a83" textLength="20.5" lengthAdjust="spacing" >2.0...</text>
<text x="701.3" y="918" font-size="11" fill="#777a83" textLength="20.9" lengthAdjust="spacing" >3.0...</text>
<text x="745.9" y="918" font-size="11" fill="#777a83" textLength="20.9" lengthAdjust="spacing" >4.0...</text>
<text x="790" y="918" font-size="11" fill="#777a83" textLength="21.3" lengthAdjust="spacing" >5.0...</text>
<text x="926.1" y="918" font-size="11" fill="#777a83" textLength="27.2" lengthAdjust="spacing" >500....</text>
<text x="981.3" y="918" font-size="11" fill="#777a83" textLength="29.5" lengthAdjust="spacing" >1.00M</text>
<text x="1034.5" y="918" font-size="11" fill="#777a83" textLength="30.0" lengthAdjust="spacing" >1.50M</text>
<text x="1087.3" y="918" font-size="11" fill="#777a83" textLength="30.4" lengthAdjust="spacing" >2.00M</text>
<text x="1140.6" y="918" font-size="11" fill="#777a83" textLength="30.7" lengthAdjust="spacing" >2.50M</text>
<text x="1243.9" y="918" font-size="11" fill="#777a83" textLength="40.2" lengthAdjust="spacing" >200.00K</text>
<text x="1310.6" y="918" font-size="11" fill="#777a83" textLength="40.6" lengthAdjust="spacing" >400.00K</text>
<text x="1377.3" y="918" font-size="11" fill="#777a83" textLength="40.6" lengthAdjust="spacing" >600.00K</text>
<text x="1495.2" y="918" font-size="11" fill="#777a83" textLength="20.6" lengthAdjust="spacing" >0.00</text>
<text x="1555.2" y="918" font-size="11" fill="#777a83" textLength="34.0" lengthAdjust="spacing" >50.00K</text>
<text x="1619.2" y="918" font-size="11" fill="#777a83" textLength="39.8" lengthAdjust="spacing" >100.00K</text>
<text x="1686" y="918" font-size="11" fill="#777a83" textLength="39.7" lengthAdjust="spacing" >150.00K</text>
<text x="526.6" y="908.7" font-size="11" fill="#7c7e86" font-weight="bold" textLength="42.2" lengthAdjust="spacing" >1676509</text>
<text x="526.6" y="908.7" font-size="11" fill="#7c7e86" font-weight="bold" textLength="42.2" lengthAdjust="spacing" opacity="0.75">1676500</text>
<rect x="500.2" y="707.4" width="19.4" height="86.8" fill="#f5f5f6" rx="4" />
<g transform="translate(514.4 787) rotate(-90)">
<text x="0" y="0" font-size="11" fill="#6a6c74" textLength="73" lengthAdjust="spacing" >CAMPAIGN_ID</text>
</g>
<line x1="1815.9" y1="600" x2="1815.9" y2="910.6" stroke="#86bdf6" stroke-width="3.8" />
<circle cx="1815.9" cy="599.6" r="6.6" fill="#fdfdfc" stroke="#86b9f3" stroke-width="1.5" />
<circle cx="1815.9" cy="910.7" r="6.6" fill="#fdfdfc" stroke="#86b9f3" stroke-width="1.5" />
</g>
<!-- user block -->
<rect x="14.4" y="899.2" width="28.4" height="27.8" fill="#ffffff" rx="3" />
<g transform="translate(28.4 913.8) scale(1.04 0.98) translate(-28.65 -72.65)">
<path d="M30.8 61.8 Q31.6 67 39.5 72.4 L26.8 83.5 Q26 78.4 17.8 72.5 Z M29.5 67 L33.8 72.7 L27.6 77.2 L23.4 72.7 Z" fill="url(#lgA)" fill-rule="evenodd"/>
<path d="M30.8 61.8 Q31.6 67 39.5 72.4 L33.8 72.7 L29.5 67 Z" fill="url(#lgB)" />
<path d="M39.5 72.4 L26.8 83.5 Q26.6 81 24.6 78.4 L27.6 77.2 L33.8 72.7 Z" fill="#1c1478" />
</g>
<g clip-path="url(#belowToast)">
<text x="54.4" y="908.6" font-size="13" fill="#ffffff" textLength="36" lengthAdjust="spacing" stroke="#ffffff" stroke-width="0.71" stroke-linejoin="round" >Admin</text>
</g>
<text x="54.4" y="922.7" font-size="11.6" fill="#c6c6cc" textLength="49.8" lengthAdjust="spacing" stroke="#c6c6cc" stroke-width="0.25" stroke-linejoin="round" >boomtrain</text>
<!-- toast -->
<rect x="16.2" y="867.6" width="217.8" height="36.4" fill="#fdfdfc" rx="6" filter="url(#toastSh)"/>
<circle cx="39" cy="885.4" r="7.1" fill="#56d35f" />
<path d="M35.8 885.6 L38.2 888 L42.4 883.4" fill="none" stroke="#ffffff" stroke-width="1.5" stroke-linecap="round" stroke-linejoin="round"/>
<text x="53.6" y="889.3" font-size="11.2" fill="#333333" textLength="143.7" lengthAdjust="spacing" stroke="#333333" stroke-width="0.62" stroke-linejoin="round" >Dashboard saved successfully.</text>
<path d="M212.4 884.6 L218.6 890.8 M218.6 884.6 L212.4 890.8" fill="none" stroke="#666" stroke-width="1" stroke-linecap="round"/>
<path d="M532.3 264.3 V275 L534.9 273 L537 278.4 L539.2 277.5 L537.1 272.5 L540.6 272.4 Z" fill="#0a0a0a" stroke="#ffffff" stroke-width="1.7" stroke-linejoin="round" paint-order="stroke"/>
</svg>
</body></html>
